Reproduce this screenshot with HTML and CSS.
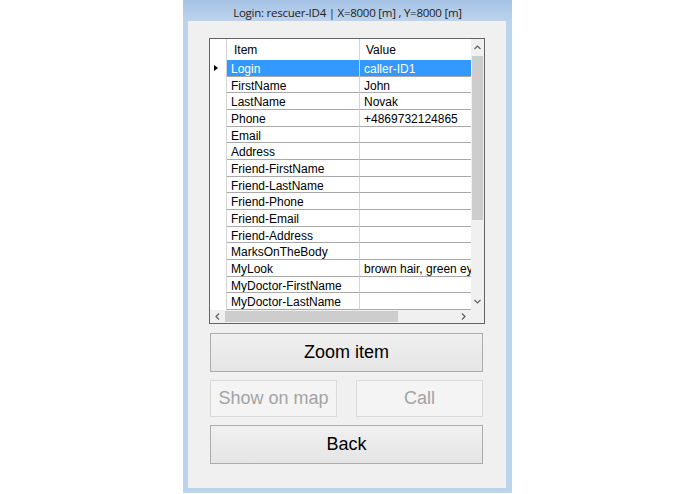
FILE: index.html
```html
<!DOCTYPE html>
<html>
<head>
<meta charset="utf-8">
<link rel="stylesheet" href="styles.css">
</head>
<body>
<div class="window">
  <div class="titlebar">Login: rescuer-ID4 | X=8000 [m] , Y=8000 [m]</div>
  <div class="client">
    <div class="dg">
      <div class="dg-main">
        <div class="row head"><div class="rh"></div><div class="c1">Item</div><div class="c2">Value</div></div>
        <div class="row sel"><div class="rh"><span class="tri"></span></div><div class="c1">Login</div><div class="c2">caller-ID1</div></div>
        <div class="row"><div class="rh"></div><div class="c1">FirstName</div><div class="c2">John</div></div>
        <div class="row"><div class="rh"></div><div class="c1">LastName</div><div class="c2">Novak</div></div>
        <div class="row"><div class="rh"></div><div class="c1">Phone</div><div class="c2">+4869732124865</div></div>
        <div class="row"><div class="rh"></div><div class="c1">Email</div><div class="c2"></div></div>
        <div class="row"><div class="rh"></div><div class="c1">Address</div><div class="c2"></div></div>
        <div class="row"><div class="rh"></div><div class="c1">Friend-FirstName</div><div class="c2"></div></div>
        <div class="row"><div class="rh"></div><div class="c1">Friend-LastName</div><div class="c2"></div></div>
        <div class="row"><div class="rh"></div><div class="c1">Friend-Phone</div><div class="c2"></div></div>
        <div class="row"><div class="rh"></div><div class="c1">Friend-Email</div><div class="c2"></div></div>
        <div class="row"><div class="rh"></div><div class="c1">Friend-Address</div><div class="c2"></div></div>
        <div class="row"><div class="rh"></div><div class="c1">MarksOnTheBody</div><div class="c2"></div></div>
        <div class="row"><div class="rh"></div><div class="c1">MyLook</div><div class="c2">brown hair, green eyes</div></div>
        <div class="row"><div class="rh"></div><div class="c1">MyDoctor-FirstName</div><div class="c2"></div></div>
        <div class="row"><div class="rh"></div><div class="c1">MyDoctor-LastName</div><div class="c2"></div></div>
      </div>
      <div class="vscroll">
        <div class="arrow"><svg width="7" height="5" viewBox="0 0 7 5"><polyline points="0.5,4 3.5,1 6.5,4" fill="none" stroke="#606060" stroke-width="1.2"/></svg></div>
        <div class="vthumb"></div>
        <div class="vtrack"></div>
        <div class="arrow"><svg width="7" height="5" viewBox="0 0 7 5"><polyline points="0.5,1 3.5,4 6.5,1" fill="none" stroke="#606060" stroke-width="1.2"/></svg></div>
      </div>
      <div class="hscroll">
        <div class="harrow"><svg width="5" height="7" viewBox="0 0 5 7"><polyline points="4,0.5 1,3.5 4,6.5" fill="none" stroke="#606060" stroke-width="1.2"/></svg></div>
        <div class="hthumb"></div>
        <div class="htrack"></div>
        <div class="harrow"><svg width="5" height="7" viewBox="0 0 5 7"><polyline points="1,0.5 4,3.5 1,6.5" fill="none" stroke="#606060" stroke-width="1.2"/></svg></div>
      </div>
      <div class="corner"></div>
    </div>
    <div class="buttons">
      <button class="btn wide">Zoom item</button>
      <div class="pair">
        <button class="btn disabled">Show on map</button>
        <button class="btn disabled">Call</button>
      </div>
      <button class="btn wide">Back</button>
    </div>
  </div>
</div>
</body>
</html>
```
FILE: styles.css
```css
html, body {
  margin: 0;
  padding: 0;
  background: #ffffff;
}
body {
  width: 695px;
  height: 494px;
  overflow: hidden;
}
.window {
  width: 329px;
  height: 493px;
  margin: 0 auto;
  background: #bcd3ec;
  display: flex;
  flex-direction: column;
  box-sizing: border-box;
}
.titlebar {
  height: 21px;
  flex: none;
  background: linear-gradient(#a6c2e5, #bdd3ec);
  font-family: "Open Sans", "Noto Sans", sans-serif;
  font-size: 11.5px;
  letter-spacing: -0.25px;
  color: #222;
  text-align: center;
  line-height: 26px;
  white-space: nowrap;
}
.client {
  flex: 1;
  margin: 0 6px 5px 5px;
  background: #f0f0f0;
  padding: 17px 21px 0 21px;
  display: flex;
  flex-direction: column;
}
.dg {
  width: 276px;
  height: 286px;
  box-sizing: border-box;
  border: 1px solid #646464;
  background: #ffffff;
  display: grid;
  grid-template-columns: 261px 13px;
  grid-template-rows: 271px 13px;
  font-family: "Liberation Sans", Arial, sans-serif;
  font-size: 12px;
  color: #000;
  overflow: hidden;
}
.dg-main {
  display: flex;
  flex-direction: column;
  overflow: hidden;
}
.row {
  display: flex;
  height: 16.667px;
  flex: none;
}
.row.head {
  height: 21px;
}
.rh {
  width: 17px;
  flex: none;
  border-right: 1px solid #d4d4d4;
  display: flex;
  align-items: center;
  padding-left: 4px;
  box-sizing: border-box;
}
.c1, .c2 {
  box-sizing: border-box;
  border-bottom: 1px solid #a9a9a9;
  padding-left: 4px;
  white-space: nowrap;
  overflow: hidden;
  line-height: 18px;
}
.c1 {
  width: 133px;
  flex: none;
  border-right: 1px solid #d4d4d4;
}
.c2 {
  flex: 1;
}
.head .c1, .head .c2 {
  border-bottom: none;
  padding-left: 7px;
  line-height: 22px;
}
.head .c2 { padding-left: 6px; }
.sel .c1, .sel .c2 {
  background: #3399ff;
  color: #fff;
}
.tri {
  width: 0;
  height: 0;
  border-top: 3.5px solid transparent;
  border-bottom: 3.5px solid transparent;
  border-left: 4px solid #000;
}
.vscroll {
  background: #f0f0f0;
  display: flex;
  flex-direction: column;
}
.arrow {
  height: 17px;
  flex: none;
  display: flex;
  align-items: center;
  justify-content: center;
}
.vthumb {
  height: 164px;
  flex: none;
  margin: 0 1px;
  background: #cdcdcd;
}
.vtrack { flex: 1; }
.hscroll {
  background: #f0f0f0;
  display: flex;
}
.harrow {
  width: 15px;
  flex: none;
  display: flex;
  align-items: center;
  justify-content: center;
}
.hthumb {
  width: 173px;
  flex: none;
  margin: 1px 0;
  background: #cdcdcd;
}
.htrack { flex: 1; }
.corner { background: #f0f0f0; }
.buttons {
  margin-top: 9px;
  display: flex;
  flex-direction: column;
  gap: 8px;
  padding: 0 2px 0 1px;
}
.btn {
  font-family: "Liberation Sans", Arial, sans-serif;
  font-size: 18px;
  color: #000;
  background: linear-gradient(#f0f0f0, #e5e5e5);
  border: 1px solid #acacac;
  border-radius: 0;
  padding: 0;
  margin: 0;
}
.wide { height: 39px; width: 100%; }
.pair {
  display: grid;
  grid-template-columns: 1fr 1fr;
  column-gap: 19px;
}
.pair .btn { height: 37px; }
.btn.disabled {
  background: #f4f4f4;
  border-color: #dadada;
  color: #a3a3a3;
}
```
